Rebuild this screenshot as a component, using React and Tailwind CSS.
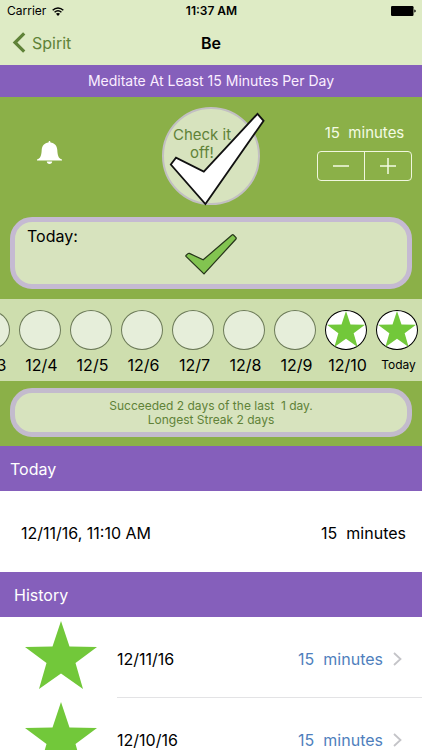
import React, { useState } from "react";

const days = [
  { label: "12/3", done: false },
  { label: "12/4", done: false },
  { label: "12/5", done: false },
  { label: "12/6", done: false },
  { label: "12/7", done: false },
  { label: "12/8", done: false },
  { label: "12/9", done: false },
  { label: "12/10", done: true },
  { label: "Today", done: true, small: true }
];

const history = [
  { date: "12/11/16", minutes: 15 },
  { date: "12/10/16", minutes: 15 }
];

const Star = ({ className }) => (
  <svg viewBox="0 0 72 68" className={className} fill="#72c83a" aria-hidden="true">
    <path d="M36 0 L44.5 25.5 L72 26 L50.5 42 L58 68 L36 52.5 L14 68 L21.5 42 L0 26 L27.5 25.5 Z" />
  </svg>
);

const Minutes = ({ value, className }) => (
  <span className={`whitespace-pre ${className}`}>{`${value}  minutes`}</span>
);

const StatusBar = () => (
  <div className="grid h-[22px] grid-cols-3 items-center pr-1.5 pl-[7px] text-xs text-black">
    <div className="flex items-center gap-1.5">
      <span>Carrier</span>
      <svg viewBox="0 0 13 10" className="h-[9px] w-3" aria-hidden="true">
        <g fill="none" stroke="#000" strokeWidth="1.6">
          <path d="M0.6 3.6 C4 0.2 9 0.2 12.4 3.6" />
          <path d="M2.7 5.9 C5 3.7 8 3.7 10.3 5.9" />
        </g>
        <path d="M6.5 10 L4.2 7.6 C5.5 6.4 7.5 6.4 8.8 7.6 Z" />
      </svg>
    </div>
    <span className="text-center font-semibold">11:37 AM</span>
    <svg viewBox="0 0 25 10" className="h-2.5 w-[25px] justify-self-end" aria-hidden="true">
      <rect width="22.5" height="10" rx="1.2" />
      <path d="M23.3 3.4 C25.2 3.8 25.2 6.2 23.3 6.6 Z" />
    </svg>
  </div>
);

const NavBar = () => (
  <nav className="grid h-[43px] grid-cols-3 items-center px-3 pb-0.5">
    <a href="#spirit" className="flex items-center gap-1.5 text-base text-[#5f8238]">
      <svg viewBox="0 0 14 21" className="h-[21px] w-3.5" aria-hidden="true">
        <path d="M12.2 1.4 L3 10.5 L12.2 19.6" fill="none" stroke="#5f8238" strokeWidth="3.2" />
      </svg>
      Spirit
    </a>
    <h1 className="text-center text-base font-semibold text-black">Be</h1>
  </nav>
);

const SectionHeader = ({ children, className }) => (
  <h2 className={`flex h-[45px] shrink-0 items-center bg-[#855fbb] text-base text-white ${className}`}>
    {children}
  </h2>
);

const DayStrip = () => (
  <ol className="flex h-[82px] shrink-0 justify-end overflow-hidden bg-[#cedeae] pt-[11px]">
    {days.map((day) => (
      <li key={day.label} className="flex w-[51px] shrink-0 flex-col items-center">
        <div
          className={`flex h-10 w-[42px] items-start justify-center rounded-[50%] border ${
            day.done ? "border-black bg-white" : "border-[#6c7a58] bg-[#e6eeda]"
          }`}
        >
          {day.done && <Star className="h-9 w-[38px]" />}
        </div>
        <span
          className={`flex h-[30px] items-center pl-1 text-black ${
            day.small ? "text-xs" : "text-base"
          }`}
        >
          {day.label}
        </span>
      </li>
    ))}
  </ol>
);

const App = () => {
  const [minutes, setMinutes] = useState(15);

  return (
    <div className="flex h-screen flex-col overflow-hidden bg-white font-['Inter','Liberation_Sans',sans-serif]">
      <header className="shrink-0 bg-[#deebc5]">
        <StatusBar />
        <NavBar />
      </header>

      <p className="flex h-8 shrink-0 items-center justify-center bg-[#855fbb] text-sm text-[#fbeeff]">
        Meditate At Least 15 Minutes Per Day
      </p>

      <main className="flex flex-col">
        {/* Check-off controls */}
        <section className="shrink-0 bg-[#8bb048] px-2.5 py-2.5">
          <div className="grid grid-cols-[1fr_auto_1fr] items-center">
            <button type="button" aria-label="Reminder" className="ml-[27px] pb-2 justify-self-start">
              <svg viewBox="0 0 25 23" className="h-[23px] w-[25px]" fill="#fff" aria-hidden="true">
                <path d="M12.5 0 C13.2 0 13.5 0.6 13.5 1.5 C17.5 2.1 20 4.6 20.3 9 C20.6 14.5 21.3 17.2 25 18.6 L25 19.6 L0 19.6 L0 18.6 C3.7 17.2 4.4 14.5 4.7 9 C5 4.6 7.5 2.1 11.5 1.5 C11.5 0.6 11.8 0 12.5 0 Z" />
                <path d="M9.8 20.5 H15.2 C15.2 22 14 23 12.5 23 C11 23 9.8 22 9.8 20.5 Z" />
              </svg>
            </button>

            <button
              type="button"
              className="relative flex size-[98px] justify-center rounded-full border-2 border-[#c2bfc2] bg-[#d7e3be] pt-[17px] pr-[18px] text-[15px] leading-[18px] text-[#5f8238]"
            >
              <span className="w-16 text-center">Check it off!</span>
              <svg
                viewBox="0 0 96 94"
                className="absolute top-1 left-1.5 h-[94px] w-24 overflow-visible"
                aria-hidden="true"
              >
                <path
                  d="M0.8 51.5 L6 44.7 L33.8 58.6 L87.5 0.8 L93.6 7.8 L35.4 91 Z"
                  fill="#fff"
                  stroke="#111"
                  strokeWidth="1.8"
                />
              </svg>
            </button>

            <div className="flex flex-col items-center gap-2 justify-self-end pb-2">
              <Minutes value={minutes} className="text-[15px] leading-5 text-[#f4fbe4]" />
              <div className="flex h-[30px] w-[95px] divide-x divide-[#f0f7de] rounded-[4px] border border-[#f0f7de]">
                <button
                  type="button"
                  aria-label="Fewer minutes"
                  className="flex flex-1 items-center justify-center"
                  onClick={() => setMinutes(minutes - 1)}
                >
                  <svg viewBox="0 0 16 16" className="size-4" aria-hidden="true">
                    <path d="M0 8 H16" stroke="#f4fbe4" strokeWidth="1.5" />
                  </svg>
                </button>
                <button
                  type="button"
                  aria-label="More minutes"
                  className="flex flex-1 items-center justify-center"
                  onClick={() => setMinutes(minutes + 1)}
                >
                  <svg viewBox="0 0 16 16" className="size-4" aria-hidden="true">
                    <path d="M0 8 H16 M8 0 V16" stroke="#f4fbe4" strokeWidth="1.5" />
                  </svg>
                </button>
              </div>
            </div>
          </div>

          <div className="mt-3 grid h-[72px] grid-cols-[1fr_auto_1fr] items-start rounded-[22px] border-[5px] border-[#c5bad2] bg-[#d7e3be] px-3 pt-0.5">
            <span className="text-base text-black">Today:</span>
            <svg viewBox="0 0 52 42" className="mt-2.5 h-[42px] w-[52px]" aria-hidden="true">
              <path
                d="M1 22.4 Q0.6 21.8 1.2 21.2 L3 19.6 Q3.6 19.1 4.4 19.4 L18.2 25.8 L47 1 Q47.8 0.4 48.5 1 L51 3.6 Q51.5 4.3 51 5 L19 40 Z"
                fill="#82c450"
                stroke="#26351a"
                strokeWidth="1.2"
              />
            </svg>
          </div>
        </section>

        <DayStrip />

        {/* Streak summary */}
        <section className="h-[65px] shrink-0 bg-[#8bb048] px-2.5 pt-[7px]">
          <div className="flex h-[49px] flex-col items-center justify-center rounded-[22px] border-[5px] border-[#c3bbcd] bg-[#d7e3be] text-xs leading-[14px] text-[#5f8238]">
            <span className="whitespace-pre">{"Succeeded 2 days of the last  1 day."}</span>
            <span>Longest Streak 2 days</span>
          </div>
        </section>

        <SectionHeader className="px-2.5">Today</SectionHeader>
        <div className="flex h-[81px] shrink-0 items-center justify-between pt-0.5 pr-4 pl-[21px] text-base text-black">
          <span>12/11/16, 11:10 AM</span>
          <Minutes value={15} className="" />
        </div>

        <SectionHeader className="px-3.5">History</SectionHeader>
        <ul>
          {history.map((item) => (
            <li key={item.date} className="flex h-[81px] items-stretch pl-[25px]">
              <Star className="mt-1 h-[68px] w-[72px] shrink-0" />
              <a
                href="#entry"
                className="ml-5 flex flex-1 items-center justify-between border-b border-[#e3e3e5] pt-1 pr-5 text-base text-black"
              >
                <span>{item.date}</span>
                <span className="flex items-center gap-2.5">
                  <Minutes value={item.minutes} className="text-[#4f7fbd]" />
                  <svg viewBox="0 0 9 14" className="h-3.5 w-[9px]" aria-hidden="true">
                    <path d="M1 1 L7.5 7 L1 13" fill="none" stroke="#c4c4c8" strokeWidth="1.8" />
                  </svg>
                </span>
              </a>
            </li>
          ))}
        </ul>
      </main>
    </div>
  );
};

export default App;
